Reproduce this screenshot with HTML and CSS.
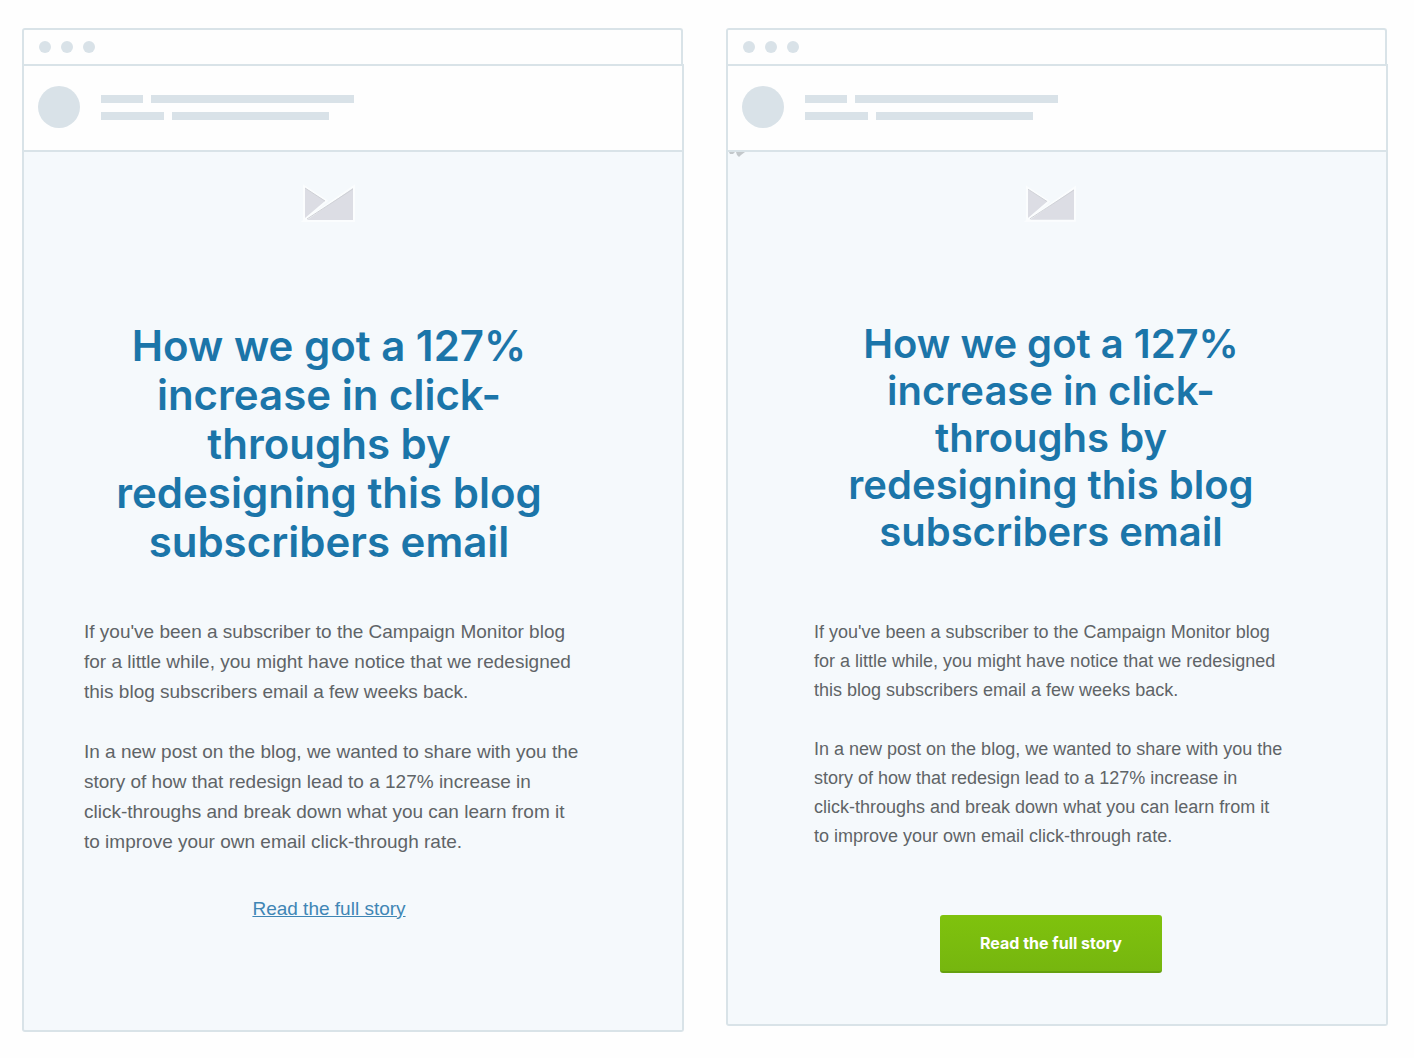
FILE: index.html
```
<!DOCTYPE html>
<html lang="en">
<head>
  <meta charset="UTF-8" />
  <meta name="viewport" content="width=device-width, initial-scale=1.0" />
  <title>Read the full story</title>
  <link rel="stylesheet" href="styles.css">
</head>
<body>

  <main class="comparison">

    <!-- Version A: text link -->
    <section class="window">
      <div class="title-bar">
        <span class="dot"></span>
        <span class="dot"></span>
        <span class="dot"></span>
      </div>
      <div class="mail-header">
        <div class="avatar"></div>
        <div class="meta">
          <div class="meta-row"><span class="bar bar-xs"></span><span class="bar bar-lg"></span></div>
          <div class="meta-row"><span class="bar bar-sm"></span><span class="bar bar-md"></span></div>
        </div>
      </div>
      <article class="mail mail-link">
        <svg class="logo" viewBox="0 0 48 33" aria-hidden="true">
          <path class="logo-halo" d="M0 1 20 14 0 31ZM48 1V33H2Z" />
          <path class="logo-shape" d="M0 1 20 14 0 31ZM48 1V33H2Z" />
          <path class="logo-edge" d="M0 1 20 14M2 32 48 2" />
        </svg>
        <h1>How we got a 127%<br>increase in click-<br>throughs by<br>redesigning this blog<br>subscribers email</h1>
        <p>If you've been a subscriber to the Campaign Monitor blog<br>for a little while, you might have notice that we redesigned<br>this blog subscribers email a few weeks back.</p>
        <p>In a new post on the blog, we wanted to share with you the<br>story of how that redesign lead to a 127% increase in<br>click-throughs and break down what you can learn from it<br>to improve your own email click-through rate.</p>
        <a class="text-link" href="#">Read the full story</a>
      </article>
    </section>

    <!-- Version B: button -->
    <section class="window">
      <div class="title-bar">
        <span class="dot"></span>
        <span class="dot"></span>
        <span class="dot"></span>
      </div>
      <div class="mail-header">
        <div class="avatar"></div>
        <div class="meta">
          <div class="meta-row"><span class="bar bar-xs"></span><span class="bar bar-lg"></span></div>
          <div class="meta-row"><span class="bar bar-sm"></span><span class="bar bar-md"></span></div>
        </div>
      </div>
      <article class="mail mail-button">
        <svg class="corner-mark" viewBox="0 0 18 6" aria-hidden="true">
          <path d="M1 0H7L5 2H2ZM8 0H17L13 3 11 5 9 3Z" />
        </svg>
        <svg class="logo" viewBox="0 0 48 33" aria-hidden="true">
          <path class="logo-halo" d="M0 1 20 14 0 31ZM48 1V33H2Z" />
          <path class="logo-shape" d="M0 1 20 14 0 31ZM48 1V33H2Z" />
          <path class="logo-edge" d="M0 1 20 14M2 32 48 2" />
        </svg>
        <h1>How we got a 127%<br>increase in click-<br>throughs by<br>redesigning this blog<br>subscribers email</h1>
        <p>If you've been a subscriber to the Campaign Monitor blog<br>for a little while, you might have notice that we redesigned<br>this blog subscribers email a few weeks back.</p>
        <p>In a new post on the blog, we wanted to share with you the<br>story of how that redesign lead to a 127% increase in<br>click-throughs and break down what you can learn from it<br>to improve your own email click-through rate.</p>
        <button class="cta" type="button">Read the full story</button>
      </article>
    </section>

  </main>

</body>
</html>
```
FILE: styles.css
```
* {
  box-sizing: border-box;
}

body {
  font-family: "Liberation Sans", Arial, sans-serif;
  background: #fefefe;
  color: #5f6467;
  margin: 0;
}

.comparison {
  display: grid;
  grid-template-columns: repeat(2, minmax(0, 1fr));
  align-items: start;
  gap: 42px;
  padding: 28px 26px 26px 22px;
}

/* Window chrome */
.title-bar {
  display: flex;
  align-items: center;
  gap: 10px;
  height: 36px;
  margin-right: 1px;
  padding-left: 15px;
  border: 2px solid #d9e3e8;
  border-bottom: 0;
  border-radius: 3px 3px 0 0;
}

.dot {
  width: 12px;
  height: 12px;
  border-radius: 50%;
  background: #d9e2e8;
}

.mail-header {
  display: flex;
  align-items: center;
  gap: 21px;
  height: 88px;
  padding: 0 14px 2px;
  border: 2px solid #d9e3e8;
}

.avatar {
  width: 42px;
  height: 42px;
  border-radius: 50%;
  background: #d9e2e8;
}

.meta {
  display: grid;
  gap: 9px;
}

.meta-row {
  display: flex;
  gap: 8px;
}

.bar {
  height: 8px;
  background: #d9e2e8;
}

.bar-xs { width: 42px; }
.bar-sm { width: 63px; }
.bar-md { width: 157px; }
.bar-lg { width: 203px; }

/* Mail body */
.mail {
  position: relative;
  display: flex;
  flex-direction: column;
  border: 2px solid #d9e3e8;
  border-top: 0;
  border-radius: 0 0 3px 3px;
  background: #f5f9fc;
  white-space: nowrap;
}

.mail-link {
  padding: 35px 108px 106px 60px;
  font-size: 19px;
  line-height: 30px;
}

.mail-button {
  padding: 36px 98px 51px 86px;
  font-size: 18px;
  line-height: 29px;
}

.logo {
  align-self: center;
  width: 48px;
  height: 33px;
  overflow: visible;
}

.mail-button .logo {
  width: 46px;
  height: 32px;
}

.logo-shape {
  fill: #dcdde4;
}

.logo-halo {
  fill: none;
  stroke: #fbfdfe;
  stroke-width: 4;
}

.logo-edge {
  fill: none;
  stroke: #cfd1d6;
  stroke-width: 1;
}

.mail h1 {
  align-self: center;
  margin: 101px 0 51px;
  font-family: Inter, "Open Sans", sans-serif;
  font-size: 42px;
  font-weight: 600;
  line-height: 49px;
  text-align: center;
  color: #1b75a9;
}

.mail-button h1 {
  margin: 100px 0 63px;
  font-size: 40px;
  line-height: 47px;
}

.mail p {
  margin: 0 0 30px;
}

.text-link {
  align-self: center;
  margin-top: 7px;
  color: #3f86b5;
}

.cta {
  align-self: center;
  width: 222px;
  height: 58px;
  margin-top: 34px;
  border: 0;
  border-bottom: 2px solid #65a00f;
  border-radius: 3px;
  background: linear-gradient(#7fc20d, #76b60f);
  font-family: Inter, "Open Sans", sans-serif;
  font-size: 16px;
  font-weight: 700;
  color: #fff;
  cursor: pointer;
}

.corner-mark {
  position: absolute;
  top: 0;
  left: 0;
  width: 18px;
  height: 6px;
  fill: #c3c8cb;
}
```
